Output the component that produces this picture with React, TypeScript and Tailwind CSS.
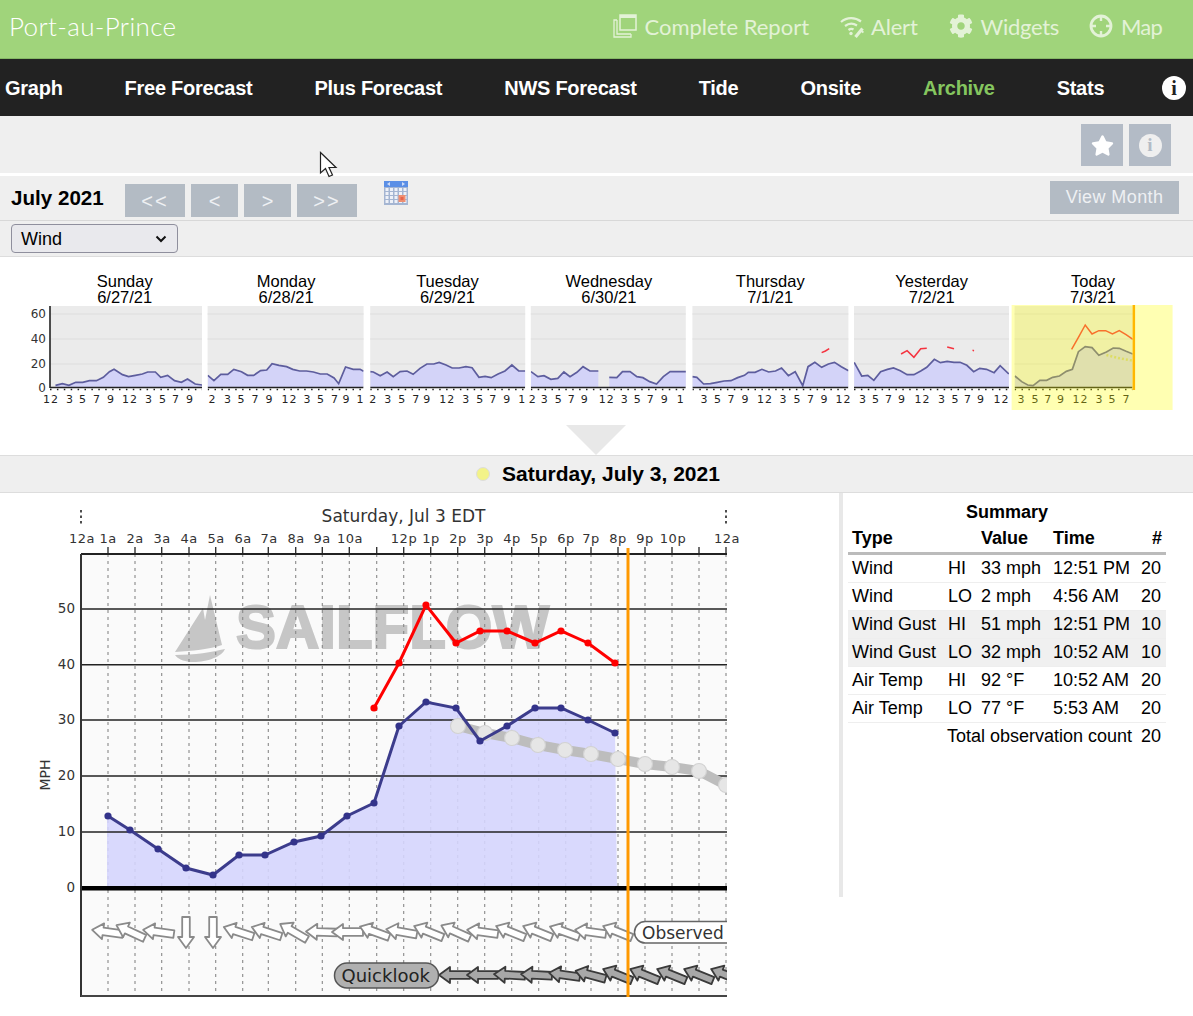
import React from "react";
import { FaCog, FaStar } from "react-icons/fa";

type P = [number, number];
const z3 = (pts: number[][]): P[] => pts.map(([x, y]) => [x / 2.613, 260 + y / 3]);
const z4 = (pts: number[][]): P[] => pts.map(([x, y]) => [600 + x / 2.644, 260 + y / 3]);
const str = (p: P[]) => p.map((a) => a.join(",")).join(" ");
const area = (p: P[], base: number) => `${p[0][0]},${base} ${str(p)} ${p[p.length - 1][0]},${base}`;

type Panel = {
  day: string; date: string; x0: number; x1: number; blues: P[][]; reds: P[][];
  ticks: [number, string][];
};

const panels: Panel[] = [
  { day: "Sunday", date: "6/27/21", x0: 50, x1: 202, reds: [],
    blues: [z3([[145,376],[163,371],[180,376],[198,367],[216,367],[234,362],[252,362],[270,352],[286,335],[298,328],[320,344],[336,350],[354,346],[372,342],[386,336],[406,336],[420,352],[438,346],[456,362],[474,367],[490,357],[510,372],[528,375]])],
    ticks: [[51,"12"],[70,"3"],[83,"5"],[97,"7"],[111,"9"],[130,"12"],[149,"3"],[163,"5"],[176,"7"],[190,"9"]] },
  { day: "Monday", date: "6/28/21", x0: 208, x1: 364, reds: [],
    blues: [z3([[544,346],[560,362],[578,343],[596,343],[612,328],[632,335],[648,346],[664,346],[682,332],[698,330],[712,311],[730,316],[750,320],[766,328],[784,333],[802,333],[820,336],[838,342],[856,342],[874,354],[886,371],[904,321],[924,328],[942,328],[951,334]])],
    ticks: [[213,"2"],[228.5,"3"],[242,"5"],[256,"7"],[270,"9"],[290,"12"],[308,"3"],[321.5,"5"],[335.5,"7"],[347,"9"],[361,"1"]] },
  { day: "Tuesday", date: "6/29/21", x0: 370, x1: 525, reds: [],
    blues: [z3([[967,335],[975,336],[993,347],[1011,336],[1027,350],[1045,335],[1063,333],[1079,343],[1097,325],[1115,312],[1133,312],[1147,307],[1165,315],[1181,324],[1199,324],[1217,320],[1233,323],[1251,352],[1267,349],[1283,353],[1301,342],[1319,333],[1337,315],[1355,333],[1372,333]])],
    ticks: [[373,"2"],[388,"3"],[402,"5"],[416,"7"],[427,"9"],[447,"12"],[466,"3"],[480,"5"],[493,"7"],[507,"9"],[522,"1"]] },
  { day: "Wednesday", date: "6/30/21", x0: 531, x1: 686, reds: [],
    blues: [
      z3([[1388,335],[1406,350],[1422,347],[1440,358],[1458,355],[1474,336],[1490,350],[1508,337],[1524,320],[1542,333],[1564,333]]),
      z4([[25,352],[45,353],[60,335],[80,335],[98,350],[114,353],[132,365],[150,372],[168,350],[186,335],[204,335],[228,335]]),
    ],
    ticks: [[533,"2"],[545,"3"],[559,"5"],[572,"7"],[585,"9"],[607,"12"],[625,"3"],[638,"5"],[651,"7"],[665,"9"],[681,"1"]] },
  { day: "Thursday", date: "7/1/21", x0: 692, x1: 848,
    blues: [z4([[243,350],[255,352],[273,372],[291,371],[309,367],[327,363],[345,362],[363,353],[381,346],[391,337],[409,337],[427,328],[445,336],[463,333],[479,324],[497,347],[515,335],[535,377],[549,320],[567,307],[585,322],[603,312],[619,307],[637,320],[656,332]])],
    reds: [z4([[585,278],[595,273],[605,266]])],
    ticks: [[704,"3"],[717.6,"5"],[731,"7"],[745,"9"],[764.5,"12"],[783,"3"],[797,"5"],[810.7,"7"],[824,"9"],[843,"12"]] },
  { day: "Yesterday", date: "7/2/21", x0: 854, x1: 1009,
    blues: [z4([[672,307],[692,348],[708,346],[724,361],[742,335],[760,328],[776,324],[794,332],[812,344],[830,344],[848,333],[864,322],[884,298],[900,308],[918,304],[936,307],[952,307],[970,316],[988,335],[1004,325],[1022,328],[1042,338],[1058,317],[1081,342]])],
    reds: [z4([[796,282],[812,272],[830,292],[848,266],[864,265]]), z4([[918,261],[936,266]]), z4([[985,271],[989,272]])],
    ticks: [[863,"3"],[876,"5"],[889,"7"],[902,"9"],[922.6,"12"],[942,"3"],[955.5,"5"],[968,"7"],[981,"9"],[1001.6,"12"]] },
  { day: "Today", date: "7/3/21", x0: 1015, x1: 1133,
    blues: [z4([[1098,348],[1116,365],[1132,375],[1146,377],[1164,361],[1182,361],[1198,352],[1216,348],[1234,334],[1250,328],[1266,275],[1284,260],[1302,263],[1320,286],[1340,276],[1358,264],[1374,265],[1392,274],[1410,282]])],
    reds: [z4([[1248,268],[1266,232],[1284,195],[1302,222],[1320,212],[1338,212],[1356,222],[1374,212],[1392,224],[1410,238]])],
    ticks: [[1022,"3"],[1036,"5"],[1048.6,"7"],[1061.4,"9"],[1081,"12"],[1100,"3"],[1113,"5"],[1127,"7"]] },
];

function MiniChart({ p, i }: { p: Panel; i: number }) {
  const colX = 44 + 161.4 * i;
  const id = `mini${i}`;
  const isToday = i === 6;
  return (
    <svg width="161.4" height="104" viewBox={`${colX} 306 161.4 104`} className="block overflow-visible">
      <defs>
        <clipPath id={id}><rect x={p.x0} y={300} width={p.x1 - p.x0} height={110} /></clipPath>
      </defs>
      <rect x={p.x0} y={306} width={p.x1 - p.x0} height={81} fill="#ebebeb" />
      {[314, 339, 364].map((y) => (
        <line key={y} x1={p.x0} x2={p.x1} y1={y} y2={y} stroke="#dddddd" strokeWidth="1.2" />
      ))}
      <g clipPath={`url(#${id})`}>
        {p.blues.map((b, k) => (
          <g key={k}>
            <polygon points={area(b, 387)} fill="#d3d3f8" />
            <polyline points={str(b)} fill="none" stroke="#5d5d9d" strokeWidth="1.7" />
          </g>
        ))}
        {p.reds.map((r, k) => (
          <polyline key={k} points={str(r)} fill="none" stroke="#f5333f" strokeWidth="1.5" />
        ))}
        <line x1={p.x0} x2={p.x1} y1={387.5} y2={387.5} stroke="#222" strokeWidth="1.6" />
        <line x1={p.x0} x2={p.x1} y1={389.5} y2={389.5} stroke="#222" strokeWidth="1.5" strokeDasharray="1.5 5.4" />
      </g>
      {p.ticks.map(([x, t], k) => (
        <text key={k} x={x} y={403} textAnchor="middle" fontSize="11" letterSpacing="1" fill="#222" fontFamily="'DejaVu Sans', sans-serif">{t}</text>
      ))}
      {i === 0 && <line x1={50} x2={50} y1={306} y2={388} stroke="#222" strokeWidth="1.6" />}
      {isToday && (
        <>
          <polyline points={str(z4([[1340,285],[1375,295],[1410,302]]))} fill="none" stroke="#cfcf90" strokeWidth="2.5" strokeDasharray="2 2" />
          <rect x={1133} y={305} width={2.5} height={85} fill="#f90" />
          <rect x={1012} y={305} width={161} height={105} fill="#ffff00" fillOpacity="0.3" />
        </>
      )}
    </svg>
  );
}

const xLabels: [number, string][] = [[82,"12a"],[108,"1a"],[135,"2a"],[162,"3a"],[189,"4a"],[216,"5a"],[243,"6a"],[269,"7a"],[296,"8a"],[322,"9a"],[350,"10a"],[404,"12p"],[431,"1p"],[458,"2p"],[485,"3p"],[512,"4p"],[539,"5p"],[566,"6p"],[591,"7p"],[618,"8p"],[645,"9p"],[673,"10p"],[727,"12a"]];
const vLines = [108,135,161.7,189,215.7,242.7,268.3,295.7,322.3,349.3,376.7,403.7,430.7,457.7,484.7,511.7,538.7,565.7,591,618,645,672,699,726];
const blue: P[] = [[108,816],[130,830],[158,849],[186,868],[213,875],[239,855],[265,855],[294,842],[321,836],[347,816],[374,803],[399,726],[426,702],[456,708],[480,741],[507,726],[535,708],[561,708],[588,720],[615,733]];
const red: P[] = [[374,708],[399,663],[426,605],[456,643],[480,631],[507,631],[535,643],[561,631],[588,643],[615,663]];
const fore: P[] = [[458,726],[485,733],[512,738],[538,745],[565,750],[591,754],[618,759],[645,764],[672,767],[699,771],[726,785]];
const topArrows: [number, number][] = [[108,8],[131,25],[159,8],[186,-90],[213,-90],[239,18],[267,18],[294,30],[322,2],[348,0],[375,20],[402,10],[429,22],[456,24],[483,8],[511,22],[538,22],[565,20],[591,8],[618,22]];
const botArrows: [number, number][] = [[455,0],[483,0],[510,3],[537,3],[565,8],[591,15],[618,22],[645,22],[672,22],[699,22],[726,22]];

function Arrow({ x, y, rot, fill, stroke }: { x: number; y: number; rot: number; fill: string; stroke: string }) {
  return (
    <polygon
      transform={`translate(${x} ${y}) rotate(${rot})`}
      points="-16,0 -5,-8 -5,-3.8 15,-3.8 15,3.8 -5,3.8 -5,8"
      fill={fill} stroke={stroke} strokeWidth="1.8" strokeLinejoin="round"
    />
  );
}

function MainChart() {
  const font = "'DejaVu Sans', sans-serif";
  return (
    <svg width="839" height="510" viewBox="0 493 839 510" className="block shrink-0">
      <defs>
        <clipPath id="plotclip"><rect x="81" y="500" width="646" height="500" /></clipPath>
      </defs>
      <text x="403.5" y="522" textAnchor="middle" fontSize="17" fill="#333" fontFamily={font}>Saturday, Jul 3 EDT</text>
      <line x1="81" x2="81" y1="510" y2="526" stroke="#222" strokeWidth="1.6" strokeDasharray="2.5 3" />
      <line x1="726" x2="726" y1="510" y2="526" stroke="#222" strokeWidth="1.6" strokeDasharray="2.5 3" />
      {xLabels.map(([x, t]) => (
        <text key={x + t} x={x} y={543} textAnchor="middle" fontSize="13" letterSpacing="0.5" fill="#333" fontFamily={font}>{t}</text>
      ))}
      <rect x="81" y="554" width="646" height="442" fill="#fafafa" />
      {/* watermark */}
      <path d="M210 595 L222 645 C210 649 192 651 175 652 L203 608 L205 620 Z" fill="#c6c6c6" />
      <path d="M175 655 C195 655 212 652 225 649 C222 657 205 663 190 662 C183 661 178 659 175 655 Z" fill="#c6c6c6" />
      <text x="236" y="648" fontSize="62" fontWeight="700" textLength="313" lengthAdjust="spacingAndGlyphs" fill="#c6c6c6" stroke="#c6c6c6" strokeWidth="2.2" fontFamily="'Liberation Sans', sans-serif">SAILFLOW</text>
      {vLines.map((x) => (
        <g key={x}>
          <line x1={x} x2={x} y1={547} y2={554} stroke="#333" strokeWidth="1.4" />
          <line x1={x} x2={x} y1={554} y2={996} stroke="#888" strokeWidth="1.1" strokeDasharray="3 4" />
        </g>
      ))}
      <polygon points={area(blue, 886).replace("108,886", "107,886").replace("615,886", "617,886").replace("108,816", "107,816")} fill="#d5d5fd" fillOpacity="0.9" />
      {[609, 664.7, 720, 776, 832].map((y) => (
        <line key={y} x1="81" x2="727" y1={y} y2={y} stroke="#222" strokeWidth="1.5" />
      ))}
      <line x1="81" x2="727" y1="554" y2="554" stroke="#222" strokeWidth="1.8" />
      <g clipPath="url(#plotclip)">
        <polyline points={str(fore)} fill="none" stroke="#bdbdbd" strokeWidth="10" />
        {fore.map(([x, y]) => <circle key={x} cx={x} cy={y} r="7.5" fill="#e6e6e6" stroke="#d2d2d2" strokeWidth="1.2" />)}
      </g>
      <polyline points={str(red)} fill="none" stroke="#ff0000" strokeWidth="3" />
      {red.map(([x, y]) => <circle key={x} cx={x} cy={y} r="3.6" fill="#ff0000" />)}
      <polyline points={str(blue)} fill="none" stroke="#3c3c8c" strokeWidth="3" />
      {blue.map(([x, y]) => <circle key={x} cx={x} cy={y} r="3.6" fill="#33338a" />)}
      <rect x="81" y="886" width="646" height="4.5" fill="#000" />
      <line x1="81" x2="81" y1="554" y2="997" stroke="#333" strokeWidth="2" />
      <line x1="81" x2="727" y1="996" y2="996" stroke="#444" strokeWidth="2" />
      {[[50,613],[40,669],[30,724],[20,780],[10,836],[0,892]].map(([t, y]) => (
        <text key={t} x="75" y={y} textAnchor="end" fontSize="13.5" fill="#333" fontFamily={font}>{t}</text>
      ))}
      <text transform="translate(50 775) rotate(-90)" textAnchor="middle" fontSize="14" fill="#333" fontFamily={font}>MPH</text>
      <g clipPath="url(#plotclip)">
        {topArrows.map(([x, r]) => <Arrow key={x} x={x} y={932} rot={r} fill="#ffffff" stroke="#8a8a8a" />)}
        {botArrows.map(([x, r]) => <Arrow key={x} x={x} y={975} rot={r} fill="#a8a8a8" stroke="#3a3a3a" />)}
        <rect x="634.5" y="921.5" width="110" height="21.5" rx="10.7" fill="#fff" stroke="#666" strokeWidth="1.5" />
        <text x="642" y="938.5" fontSize="17" fill="#333" fontFamily={font}>Observed</text>
      </g>
      <rect x="334.5" y="963" width="104" height="25" rx="12.5" fill="#b0b0b0" stroke="#555" strokeWidth="1.5" />
      <text x="341.5" y="982" fontSize="18" fill="#222" fontFamily={font}>Quicklook</text>
      <rect x="626.5" y="548" width="3" height="449" fill="#ff9900" />
    </svg>
  );
}

const rows: [string, string, string, string, string, boolean][] = [
  ["Wind", "HI", "33 mph", "12:51 PM", "20", false],
  ["Wind", "LO", "2 mph", "4:56 AM", "20", false],
  ["Wind Gust", "HI", "51 mph", "12:51 PM", "10", true],
  ["Wind Gust", "LO", "32 mph", "10:52 AM", "10", true],
  ["Air Temp", "HI", "92 °F", "10:52 AM", "20", false],
  ["Air Temp", "LO", "77 °F", "5:53 AM", "20", false],
];

function InfoCircle({ size, color, text }: { size: string; color: string; text: string }) {
  return (
    <span className={`flex items-center justify-center rounded-full font-bold font-['Liberation_Serif',serif] ${size} ${color} ${text}`}>i</span>
  );
}

function Calendar() {
  const cols = [0, 1, 2, 3, 4];
  return (
    <svg width="24" height="24" viewBox="0 0 24 24" className="block">
      <rect width="24" height="24" fill="#a4b5d2" />
      <rect width="24" height="6" fill="#5b8fe6" />
      <path d="M3 3 L6 1 V5 Z M21 3 L18 1 V5 Z" fill="#cfdcf8" />
      {[7, 11, 15, 19].map((y) =>
        cols.map((c) => (
          <rect key={`${y}${c}`} x={1.5 + c * 4.5} y={y} width="3" height="3" fill="#eef1f8" />
        ))
      )}
      <rect x="14.5" y="14" width="7" height="7" fill="#ee8f72" />
      <rect x="16.5" y="16" width="3" height="3" fill="#e8634a" />
    </svg>
  );
}

export default function App() {
  const navs = ["Graph", "Free Forecast", "Plus Forecast", "NWS Forecast", "Tide", "Onsite", "Archive", "Stats"];
  return (
    <div className="relative w-[1193px] h-[1016px] overflow-hidden bg-white font-['Liberation_Sans',Arial,sans-serif] text-black">
      {/* Green header */}
      <header className="flex h-[59px] items-center justify-between border-b border-[#86b866] bg-[#a0d47b] pb-[6px] pl-[9px] pr-[31px] font-['Lato',sans-serif]">
        <span className="text-[26px] font-light tracking-[0.35px] text-white">Port-au-Prince</span>
        <nav className="flex items-center gap-[31px] text-[22px] text-[#e3f2d7]">
          <span className="flex items-center gap-[7px]">
            <svg width="24" height="24" viewBox="0 0 24 24" fill="none" stroke="#e3f2d7" strokeWidth="1.5">
              <rect x="7" y="1" width="16" height="15" />
              <path d="M7 2.5H23" strokeWidth="3" />
              <path d="M4 6H1v17h17v-3M4 6v14h14" strokeWidth="1.3" />
            </svg>
            Complete Report
          </span>
          <span className="flex items-center gap-[7px] tracking-[-0.2px]">
            <svg width="24" height="24" viewBox="0 0 24 24" fill="none" stroke="#e3f2d7" strokeWidth="2.2">
              <path d="M1 8C7 3 15 3 21 7.5" />
              <path d="M5 12C9 9 13 9 17 11.5" />
              <path d="M8.5 16C10.5 14.5 12 14.5 13.5 15.5" />
              <circle cx="11" cy="19.5" r="1.7" fill="#e3f2d7" stroke="none" />
              <path d="M15.5 23L22.5 14.5" strokeWidth="3.2" />
              <path d="M20 16L23.5 18.5" strokeWidth="2" />
            </svg>
            Alert
          </span>
          <span className="flex items-center gap-[8px] tracking-[-0.3px]">
            <FaCog size={24} color="#e3f2d7" />
            Widgets
          </span>
          <span className="-ml-[1px] flex items-center gap-[8px] tracking-[-0.8px]">
            <svg width="24" height="24" viewBox="0 0 24 24" fill="none" stroke="#e3f2d7" strokeWidth="2.8">
              <circle cx="12" cy="12" r="10" />
              <path d="M12 2V7M12 17V22M2 12H7M17 12H22" strokeWidth="2.4" />
            </svg>
            Map
          </span>
        </nav>
      </header>

      {/* Black nav */}
      <nav className="flex h-[57px] items-center bg-[#222222] pl-[5px] pr-[7px]">
        <div className="flex flex-1 items-center gap-[62px] text-[20px] font-bold tracking-[-0.26px] text-white">
          {navs.map((n) => (
            <span key={n} className={n === "Archive" ? "text-[#85c65f]" : ""}>{n}</span>
          ))}
        </div>
        <InfoCircle size="h-[24px] w-[24px] text-[20px]" color="bg-white" text="text-[#222]" />
      </nav>

      {/* Toolbar */}
      <div className="flex h-[57px] items-start justify-end gap-[6px] bg-[#efefef] pr-[22px] pt-[8px]">
        <span className="flex h-[42px] w-[42px] items-center justify-center bg-[#b3bbc6]"><FaStar size={23} color="#fff" /></span>
        <span className="flex h-[42px] w-[42px] items-center justify-center bg-[#b3bbc6]">
          <InfoCircle size="h-[23px] w-[23px] text-[19px]" color="bg-[#efefef]" text="text-[#b3bbc6]" />
        </span>
      </div>
      <div className="h-[3px] bg-white" />

      {/* Month row */}
      <div className="flex h-[45px] items-start border-b border-[#d8d8d8] bg-[#efefef] pl-[11px] pr-[14px]">
        <span className="mt-[9px] w-[114px] text-[20.6px] font-bold leading-[26px]">July 2021</span>
        <div className="mt-[8px] flex gap-[6px] text-[20px] text-[#eef0f3]">
          <span className="flex h-[33px] w-[60px] items-center justify-center bg-[#b3bbc4] tracking-[2px]">&lt;&lt;</span>
          <span className="flex h-[33px] w-[47px] items-center justify-center bg-[#b3bbc4]">&lt;</span>
          <span className="flex h-[33px] w-[47px] items-center justify-center bg-[#b3bbc4]">&gt;</span>
          <span className="flex h-[33px] w-[60px] items-center justify-center bg-[#b3bbc4] tracking-[2px]">&gt;&gt;</span>
        </div>
        <span className="ml-[27px] mt-[5px]"><Calendar /></span>
        <span className="ml-auto mt-[5px] flex h-[33px] w-[129px] items-center justify-center bg-[#b3bbc4] text-[18px] tracking-[0.4px] text-[#eef0f3]">View Month</span>
      </div>

      {/* Select row */}
      <div className="flex h-[36px] items-start border-b border-[#dddddd] bg-[#efefef] pl-[11px] pt-[3px]">
        <div className="flex h-[29px] w-[167px] items-center justify-between rounded-[4px] border border-[#8f8f9d] bg-[#e9e9ed] pl-[9px] pr-[10px] pt-[1px] text-[18px]">
          <span>Wind</span>
          <svg width="12" height="8" viewBox="0 0 12 8" fill="none" stroke="#111" strokeWidth="2"><path d="M1.5 1.5L6 6L10.5 1.5" /></svg>
        </div>
      </div>

      {/* Week */}
      <div className="flex pt-[15px]">
        <div className="w-[44px] shrink-0 pt-[34px]">
          <svg width="44" height="104" viewBox="0 306 44 104" className="block overflow-visible">
            {[["60", 318], ["40", 343], ["20", 368], ["0", 392]].map(([t, y]) => (
              <text key={t} x="46" y={y} textAnchor="end" fontSize="12" fill="#333" fontFamily="'DejaVu Sans', sans-serif">{t}</text>
            ))}
          </svg>
        </div>
        {panels.map((p, i) => (
          <div key={p.day} className="w-[161.4px] shrink-0">
            <div className="h-[34px] pt-[1px] text-center text-[16.5px] leading-[16px]">
              <div>{p.day}</div>
              <div>{p.date}</div>
            </div>
            <MiniChart p={p} i={i} />
          </div>
        ))}
      </div>

      {/* Pointer triangle */}
      <div className="flex h-[45px] items-end pl-[566px]">
        <svg width="60" height="30" viewBox="0 0 60 30" className="block"><polygon points="0,0 60,0 30,30" fill="#e8e8e8" /></svg>
      </div>

      {/* Date bar */}
      <div className="flex h-[38px] items-center border-y border-[#dddddd] bg-[#efefef] pl-[476px]">
        <span className="h-[14px] w-[14px] rounded-full border border-[#dddddd] bg-[#f3f389]" />
        <span className="ml-[12px] text-[21px] font-bold">Saturday, July 3, 2021</span>
      </div>

      {/* Detail */}
      <div className="flex items-start">
        <MainChart />
        <div className="h-[404px] w-[354px] border-l-4 border-[#e8e8e8] pl-[5px] pt-[6px]">
          <div className="w-[318px] text-center text-[18px] font-bold leading-[26px]">Summary</div>
          <table className="w-[318px] table-fixed border-collapse text-[18px]">
            <colgroup>
              <col className="w-[99px]" /><col className="w-[31px]" /><col className="w-[72px]" /><col className="w-[88px]" /><col className="w-[28px]" />
            </colgroup>
            <thead>
              <tr className="h-[28px] border-b-[3px] border-[#bbbbbb] font-bold">
                <th className="pl-[4px] text-left">Type</th>
                <th />
                <th className="pl-[3px] text-left">Value</th>
                <th className="pl-[3px] text-left">Time</th>
                <th className="pr-[4px] text-right">#</th>
              </tr>
            </thead>
            <tbody>
              {rows.map((r, i) => (
                <tr key={i} className={`h-[28px] border-b border-[#eeeeee] ${r[5] ? "bg-[#f0f0f0]" : ""}`}>
                  <td className="pl-[4px] whitespace-nowrap">{r[0]}</td>
                  <td className="pl-[1px]">{r[1]}</td>
                  <td className="pl-[3px]">{r[2]}</td>
                  <td className="pl-[3px] whitespace-nowrap">{r[3]}</td>
                  <td className="pr-[5px] text-right">{r[4]}</td>
                </tr>
              ))}
              <tr className="h-[28px]">
                <td />
                <td colSpan={3} className="whitespace-nowrap">Total observation count</td>
                <td className="pr-[5px] text-right">20</td>
              </tr>
            </tbody>
          </table>
        </div>
      </div>

      {/* Mouse cursor */}
      <svg width="20" height="28" viewBox="0 0 20 28" className="absolute left-[319px] top-[151px]">
        <path d="M1.5 1.5V22L6.5 17.5L10 25.5L13.5 24L10 16.5H17Z" fill="#ffffff" stroke="#222" strokeWidth="1.2" />
      </svg>
    </div>
  );
}
